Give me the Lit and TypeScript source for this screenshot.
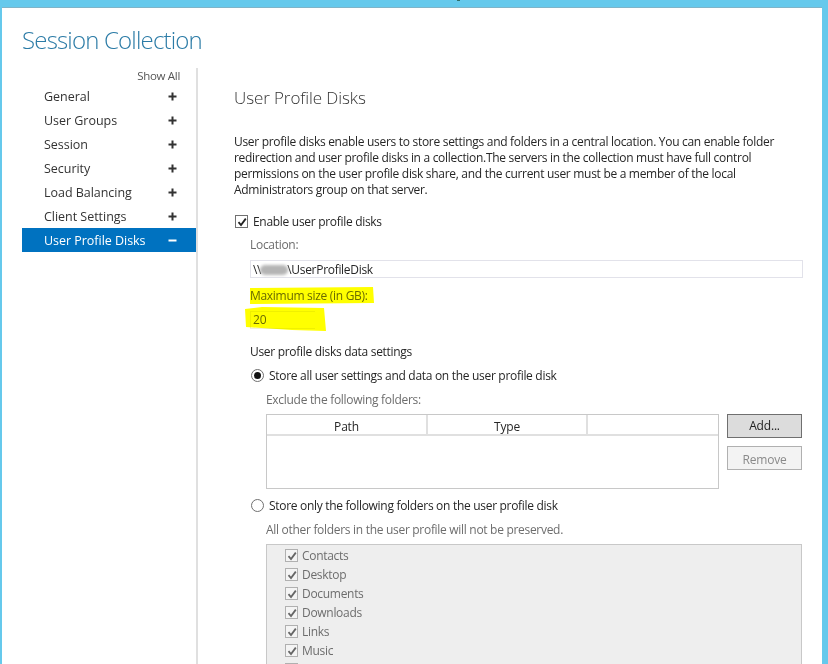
import { LitElement, html, css, svg } from 'lit';
import { customElement } from 'lit/decorators.js';

const NAV = ['General', 'User Groups', 'Session', 'Security', 'Load Balancing', 'Client Settings', 'User Profile Disks'];
// the last row is cut by the bottom of the screenshot, only its box shows
const FOLDERS = ['Contacts', 'Desktop', 'Documents', 'Downloads', 'Links', 'Music', ''];

const tick = svg`<path d="M2.5 6.2 L5 9 L9.8 2.6" fill="none" stroke="currentColor" stroke-width="1.8"/>`;

@customElement('app-root')
export class AppRoot extends LitElement {
  static styles = css`
    :host {
      display: block;
      width: 828px;
      height: 664px;
      overflow: hidden;
      background: #65c9ec;
      font-family: 'Open Sans', 'Noto Sans', sans-serif;
      font-size: 12px;
      color: #262626;
    }

    .window {
      position: relative;
      height: 656px;
      margin: 8px 6px 0 2px;
      padding: 0 20px;
      background: #fff;
      box-shadow: 0 -1px 0 #7fb4c8;
    }

    .speck {
      position: absolute;
      left: 455px;
      top: -8px;
      width: 3px;
      height: 1px;
      background: #2f6f6a;
    }

    h1 {
      margin: 0;
      padding-top: 15px;
      height: 45px;
      font-size: 24px;
      line-height: 33px;
      font-weight: 300;
      color: #2b7ba6;
      letter-spacing: -0.82px;
    }

    .columns {
      display: flex;
      height: 596px;
    }

    .nav {
      width: 174px;
      border-right: 2px solid #e0e0e0;
      flex: none;
    }

    .show-all {
      height: 16px;
      padding: 0 16px 0 0;
      text-align: right;
      font-size: 11.5px;
      line-height: 16px;
      color: #555;
      letter-spacing: -0.3px;
    }

    .nav-row {
      display: flex;
      justify-content: space-between;
      align-items: center;
      height: 24px;
      padding: 0 19px 0 22px;
      font-size: 12.5px;
      color: #333;
      letter-spacing: -0.03px;
    }

    .nav-row.active {
      background: #0072c0;
      color: #fff;
    }

    .sign {
      width: 9px;
      height: 9px;
    }

    .main {
      padding-left: 36px;
      flex: 1;
      min-width: 0;
    }

    h2 {
      margin: 0;
      padding-top: 18px;
      height: 45px;
      font-size: 17px;
      line-height: 24px;
      font-weight: 300;
      color: #333;
      letter-spacing: -0.1px;
      box-sizing: border-box;
    }

    .intro {
      margin: 21px 0 0;
      width: 560px;
      line-height: 16px;
      letter-spacing: -0.3px;
      color: #262626;
    }

    .row {
      display: flex;
      align-items: center;
      gap: 5px;
      letter-spacing: -0.3px;
    }

    .enable {
      margin: 15px 0 0 1px;
      height: 16px;
    }

    .box {
      width: 11px;
      height: 11px;
      border: 1px solid #707070;
      background: #fff;
      color: #222;
      flex: none;
    }

    .box svg {
      display: block;
      width: 11px;
      height: 11px;
    }

    .fields {
      padding-left: 16px;
    }

    .label {
      letter-spacing: -0.3px;
      line-height: 16px;
    }

    .muted {
      color: #6d6d6d;
    }

    .location-label {
      margin-top: 8px;
    }

    .input {
      margin-top: 7px;
      height: 16px;
      border: 1px solid #e2e2ea;
      padding-left: 2px;
      line-height: 17px;
      letter-spacing: -0.3px;
      width: 549px;
    }

    .blur {
      display: inline-block;
      width: 28px;
      height: 10px;
      margin: 0 -1px;
      vertical-align: -1px;
      background: #b4b4b4;
      border-radius: 5px;
      filter: blur(1.5px);
    }

    .size-label {
      margin-top: 10px;
      color: #6a6a3a;
    }

    .size-input {
      margin-top: 7px;
      height: 16px;
      width: 62px;
      border: 1px solid #f0f0d8;
      border-right: 0;
      padding-left: 2px;
      line-height: 16px;
      color: #6a6a3a;
    }

    .data-title {
      margin-top: 15px;
    }

    .radio-row {
      margin: 7px 0 0 1px;
      height: 16px;
    }

    .radio {
      position: relative;
      width: 11px;
      height: 11px;
      border: 1px solid #707070;
      border-radius: 50%;
      background: #fff;
      flex: none;
    }

    .radio.on::after {
      content: '';
      position: absolute;
      inset: 2px;
      border-radius: 50%;
      background: #111;
    }

    .indent {
      margin-left: 16px;
    }

    .exclude-label {
      margin-top: 9px;
    }

    .table-row {
      display: flex;
      gap: 8px;
      margin-top: 6px;
    }

    .table {
      width: 451px;
      height: 73px;
      border: 1px solid #c8c8c8;
      flex: none;
    }

    .thead {
      display: grid;
      grid-template-columns: 159px 160px 1fr;
      grid-template-rows: 19px;
      height: 19px;
      border-bottom: 2px solid #e0e0e0;
      line-height: 24px;
      text-align: center;
      letter-spacing: -0.18px;
    }

    .thead span + span {
      border-left: 2px solid #e0e0e0;
    }

    .buttons {
      display: flex;
      flex-direction: column;
      gap: 8px;
    }

    .btn {
      width: 73px;
      height: 22px;
      border: 1px solid #6f6f6f;
      background: #dcdcdc;
      text-align: center;
      line-height: 22px;
      letter-spacing: -0.18px;
      color: #222;
    }

    .btn.off {
      border-color: #b0b0b0;
      background: #f3f3f3;
      color: #8a8a8a;
      line-height: 26px;
    }

    .second-radio {
      margin-top: 8px;
    }

    .other-label {
      margin-top: 9px;
    }

    .folders {
      margin-top: 6px;
      height: 140px;
      width: 516px;
      border: 1px solid #c8c8c8;
      border-bottom: 0;
      background: #eee;
      padding: 1px 0 0 18px;
    }

    .folder {
      height: 19px;
      gap: 4px;
      color: #6d6d6d;
    }

    .folder .box {
      background: #f4f4f4;
      border-color: #b0b0b0;
      color: #666;
    }

    .highlight {
      position: absolute;
      left: 240px;
      top: 275px;
      width: 135px;
      height: 60px;
      mix-blend-mode: multiply;
      pointer-events: none;
    }
  `;

  render() {
    return html`
      <div class="window">
        <div class="speck"></div>
        <h1>Session Collection</h1>
        <div class="columns">
          <div class="nav">
            <div class="show-all">Show All</div>
            ${NAV.map((name, i) => {
              const active = i === NAV.length - 1;
              return html`
                <div class="nav-row ${active ? 'active' : ''}">
                  <span>${name}</span>
                  <svg class="sign" viewBox="0 0 9 9">
                    <rect x="0.5" y="3.5" width="8" height="2" fill="currentColor"></rect>
                    ${active ? '' : svg`<rect x="3.5" y="0.5" width="2" height="8" fill="currentColor"></rect>`}
                  </svg>
                </div>
              `;
            })}
          </div>
          <div class="main">
            <h2>User Profile Disks</h2>
            <p class="intro">
              User profile disks enable users to store settings and folders in a central location. You can enable folder
              redirection and user profile disks in a collection.The servers in the collection must have full control
              permissions on the user profile disk share, and the current user must be a member of the local
              Administrators group on that server.
            </p>
            <div class="row enable">
              <span class="box"><svg viewBox="0 0 11 11">${tick}</svg></span>
              <span>Enable user profile disks</span>
            </div>
            <div class="fields">
              <div class="label muted location-label">Location:</div>
              <div class="input">\\\\<span class="blur"></span>\\UserProfileDisk</div>
              <div class="label size-label">Maximum size (in GB):</div>
              <div class="size-input">20</div>
              <div class="label data-title">User profile disks data settings</div>
              <div class="row radio-row"><span class="radio on"></span><span>Store all user settings and data on the user profile disk</span></div>
              <div class="indent">
                <div class="label muted exclude-label">Exclude the following folders:</div>
                <div class="table-row">
                  <div class="table">
                    <div class="thead"><span>Path</span><span>Type</span><span></span></div>
                  </div>
                  <div class="buttons">
                    <div class="btn">Add...</div>
                    <div class="btn off">Remove</div>
                  </div>
                </div>
              </div>
              <div class="row radio-row second-radio"><span class="radio"></span><span>Store only the following folders on the user profile disk</span></div>
              <div class="indent">
                <div class="label muted other-label">All other folders in the user profile will not be preserved.</div>
                <div class="folders">
                  ${FOLDERS.map(
                    (name) => html`
                      <div class="row folder">
                        <span class="box"><svg viewBox="0 0 11 11">${tick}</svg></span>
                        <span>${name}</span>
                      </div>
                    `
                  )}
                </div>
              </div>
            </div>
          </div>
        </div>
        <svg class="highlight" viewBox="0 0 135 60">
          <path d="M8 5 L131 4 L132 20 L8 21 Z M3 26 L20 24 L82 25 L84 48 L50 47 L4 44 Z" fill="#ffff00"></path>
        </svg>
      </div>
    `;
  }
}
